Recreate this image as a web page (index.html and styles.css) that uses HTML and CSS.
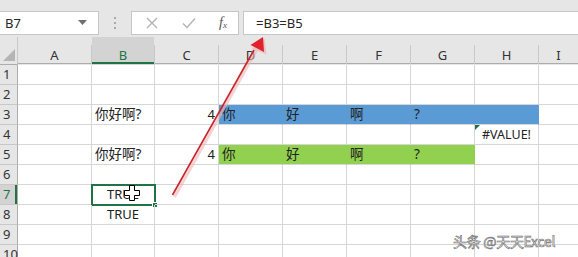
FILE: index.html
```html
<!DOCTYPE html>
<html>
<head>
<meta charset="utf-8">
<link rel="stylesheet" href="styles.css">
</head>
<body>
<div class="app">
  <div class="toolbar">
    <div class="namebox"><span>B7</span><svg class="caret" width="9" height="6" viewBox="0 0 9 6"><path d="M0 0H9L4.5 5Z" fill="#6e6e6e"/></svg></div>
    <div class="dots"><i></i><i></i><i></i></div>
    <div class="btns">
      <svg width="12" height="12" viewBox="0 0 12 12"><path d="M1 1L11 11M11 1L1 11" stroke="#b4b4b4" stroke-width="1.4"/></svg>
      <svg width="14" height="12" viewBox="0 0 14 12"><path d="M1 6.5L5 10.5L13 1.5" stroke="#b4b4b4" stroke-width="1.4" fill="none"/></svg>
      <span class="fx">f<sub>x</sub></span>
    </div>
    <div class="formula">=B3=B5</div>
  </div>
  <div class="grid">
    <div class="corner"><svg width="12" height="12" viewBox="0 0 12 12"><path d="M12 0V12H0Z" fill="#b5b5b5"/></svg></div>
    <div class="ch">A</div><div class="ch sel">B</div><div class="ch">C</div><div class="ch">D</div><div class="ch">E</div><div class="ch">F</div><div class="ch">G</div><div class="ch">H</div><div class="ch">I</div>

    <div class="rh">1</div><div class="c"></div><div class="c"></div><div class="c"></div><div class="c"></div><div class="c"></div><div class="c"></div><div class="c"></div><div class="c"></div><div class="c"></div>
    <div class="rh">2</div><div class="c"></div><div class="c"></div><div class="c"></div><div class="c"></div><div class="c"></div><div class="c"></div><div class="c"></div><div class="c"></div><div class="c"></div>
    <div class="rh">3</div><div class="c"></div><div class="c t">你好啊?</div><div class="c n">4</div><div class="c t blue">你</div><div class="c t blue">好</div><div class="c t blue">啊</div><div class="c t blue">?</div><div class="c blue"></div><div class="c"></div>
    <div class="rh">4</div><div class="c"></div><div class="c"></div><div class="c"></div><div class="c"></div><div class="c"></div><div class="c"></div><div class="c"></div><div class="c err"><span class="tri"></span>#VALUE!</div><div class="c"></div>
    <div class="rh">5</div><div class="c"></div><div class="c t">你好啊?</div><div class="c n">4</div><div class="c t green">你</div><div class="c t green">好</div><div class="c t green">啊</div><div class="c t green">?</div><div class="c"></div><div class="c"></div>
    <div class="rh">6</div><div class="c"></div><div class="c"></div><div class="c"></div><div class="c"></div><div class="c"></div><div class="c"></div><div class="c"></div><div class="c"></div><div class="c"></div>
    <div class="rh rsel">7</div><div class="c"></div><div class="c b active">TRUE<span class="handle"></span></div><div class="c"></div><div class="c"></div><div class="c"></div><div class="c"></div><div class="c"></div><div class="c"></div><div class="c"></div>
    <div class="rh">8</div><div class="c"></div><div class="c b">TRUE</div><div class="c"></div><div class="c"></div><div class="c"></div><div class="c"></div><div class="c"></div><div class="c"></div><div class="c"></div>
    <div class="rh">9</div><div class="c"></div><div class="c"></div><div class="c"></div><div class="c"></div><div class="c"></div><div class="c"></div><div class="c"></div><div class="c"></div><div class="c"></div>
    <div class="rh">10</div><div class="c"></div><div class="c"></div><div class="c"></div><div class="c"></div><div class="c"></div><div class="c"></div><div class="c"></div><div class="c"></div><div class="c"></div>
  </div>

  <svg class="cursor" width="16" height="16" viewBox="0 0 16 16"><path d="M5.5 0.5H10.5V5.5H15.5V10.5H10.5V15.5H5.5V10.5H0.5V5.5H5.5Z" fill="#fff" stroke="#000" stroke-width="1"/></svg>

  <svg class="arrow" width="578" height="257" viewBox="0 0 578 257">
    <line x1="174.5" y1="197" x2="256.5" y2="50" stroke="#f0b5b5" stroke-width="3" opacity="0.6"/>
    <line x1="172.5" y1="195" x2="254" y2="50" stroke="#c8262b" stroke-width="1.6"/>
    <path d="M263 37L265 53L250.5 47Z" fill="#f0a0a0" opacity="0.5" transform="translate(1.5 1.5)"/>
    <path d="M263 37L264 52L250.5 45Z" fill="#e0232a"/>
  </svg>

  <div class="watermark">头条 @天天Excel</div>
</div>
</body>
</html>
```
FILE: styles.css
```css
* { box-sizing: border-box; }
html, body { margin: 0; padding: 0; }
body {
  width: 578px;
  height: 257px;
  overflow: hidden;
  background: #fff;
  font-family: "Noto Sans", "Noto Sans CJK SC", sans-serif;
}
.app {
  position: relative;
  width: 578px;
  height: 257px;
  overflow: hidden;
}
.toolbar {
  height: 37px;
  background: #e6e6e6;
  padding-top: 11px;
  display: flex;
  align-items: flex-start;
}
.namebox {
  width: 100px;
  height: 24px;
  margin-left: -1px;
  background: #fff;
  border: 1px solid #c6c6c6;
  display: flex;
  align-items: center;
  justify-content: space-between;
  padding: 0 11px 0 5px;
  font-size: 13px;
  color: #262626;
}
.dots {
  width: 32px;
  height: 24px;
  display: flex;
  flex-direction: column;
  align-items: center;
  justify-content: center;
  gap: 3px;
}
.dots i {
  width: 2px;
  height: 2px;
  background: #a8a8a8;
  display: block;
}
.btns {
  width: 108px;
  height: 24px;
  background: #fff;
  border: 1px solid #c6c6c6;
  display: flex;
  align-items: center;
  justify-content: space-between;
  padding: 0 11px 0 14px;
}
.fx {
  font-family: "Liberation Serif", serif;
  font-style: italic;
  font-size: 14px;
  color: #555;
  line-height: 1;
}
.fx sub { font-size: 9px; vertical-align: -1px; }
.formula {
  flex: 1;
  margin-left: 4px;
  height: 24px;
  background: #fff;
  border: 1px solid #c6c6c6;
  border-right: none;
  font-size: 13px;
  color: #262626;
  padding-left: 12px;
  line-height: 22px;
}
.grid {
  display: grid;
  grid-template-columns: 18px 74px 63px 64px 64px 64px 64px 64px 64px 40px;
  grid-template-rows: 28px repeat(10, 20px);
  font-size: 13px;
  color: #222;
}
.corner {
  background: #e6e6e6;
  border-right: 1px solid #c8c8c8;
  border-bottom: 1px solid #acacac;
  display: flex;
  align-items: flex-end;
  justify-content: flex-end;
  padding: 0 2px 3px 0;
}
.ch {
  background: #e6e6e6;
  border-bottom: 1px solid #acacac;
  border-right: 1px solid #c8c8c8;
  display: flex;
  align-items: center;
  justify-content: center;
  padding-top: 8px;
  font-size: 13px;
  color: #333;
  border-image: linear-gradient(to bottom, #e6e6e6 8px, #c8c8c8 8px) 0 1 0 0;
  box-shadow: inset 0 -1px 0 #acacac;
}
.ch.sel {
  background: #d3d3d3;
  color: #217346;
  box-shadow: inset 0 -2px 0 #217346;
  border-image: linear-gradient(to bottom, #e6e6e6 8px, #c8c8c8 8px) 0 1 0 0;
}
.rh {
  background: #e6e6e6;
  border-right: 1px solid #acacac;
  border-bottom: 1px solid #c8c8c8;
  font-size: 13px;
  color: #333;
  padding-left: 3px;
  line-height: 19px;
}
.rh.rsel {
  background: #d3d3d3;
  color: #217346;
  box-shadow: inset -2px 0 0 #217346;
}
.c {
  border-right: 1px solid #d6d6d6;
  border-bottom: 1px solid #d6d6d6;
  line-height: 19px;
  white-space: nowrap;
  position: relative;
}
.c.t {
  padding-left: 3px;
  font-size: 13.5px;
}
.c.n {
  text-align: right;
  padding-right: 3px;
}
.c.b { text-align: center; }
.c.err {
  text-align: center;
  font-size: 12.5px;
}
.tri {
  position: absolute;
  left: 0;
  top: 0;
  width: 0;
  height: 0;
  border-top: 5px solid #1e7145;
  border-right: 5px solid transparent;
}
.blue {
  background: #5b9bd5;
  border-right-color: #5b9bd5;
}
.green {
  background: #92d050;
  border-right-color: #92d050;
}
.active {
  outline: 2px solid #217346;
  outline-offset: -1px;
}
.handle {
  position: absolute;
  right: -4px;
  bottom: -4px;
  width: 6px;
  height: 6px;
  background: #217346;
  border: 1px solid #fff;
}
.cursor {
  position: absolute;
  left: 124px;
  top: 185px;
}
.arrow {
  position: absolute;
  left: 0;
  top: 0;
}
.watermark {
  position: absolute;
  left: 453px;
  top: 231px;
  font-family: "Noto Sans CJK SC", sans-serif;
  font-size: 14px;
  color: #fff;
  letter-spacing: -0.3px;
  -webkit-text-stroke: 0.6px #6a6a6a;
}
```
